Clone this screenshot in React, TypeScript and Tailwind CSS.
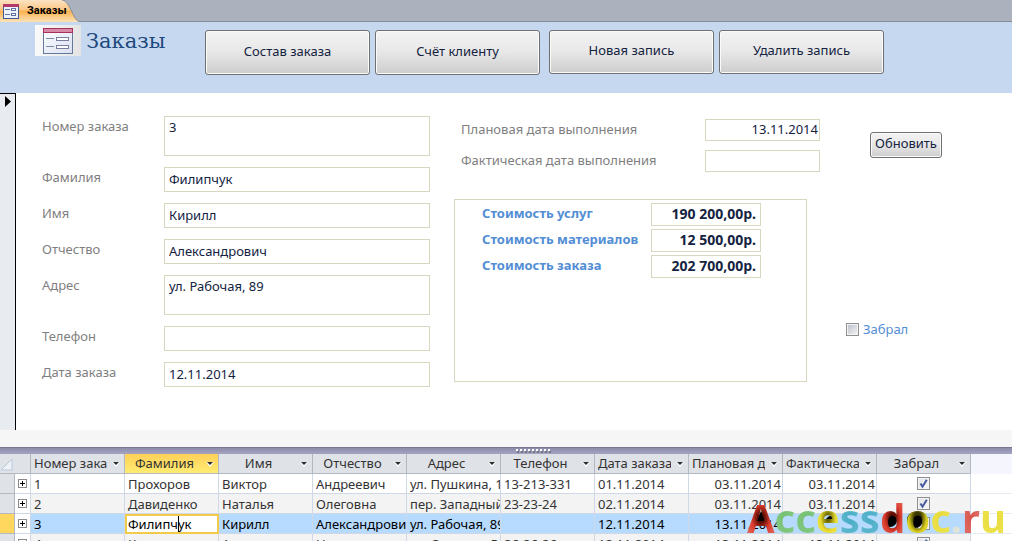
import { ReactNode } from 'react';
import clsx from 'clsx';

const columns = [
    'Номер заказа',
    'Фамилия',
    'Имя',
    'Отчество',
    'Адрес',
    'Телефон',
    'Дата заказа',
    'Плановая дата',
    'Фактическая дата',
];

const orders = [
    { cells: ['1', 'Прохоров', 'Виктор', 'Андреевич', 'ул. Пушкина, 12', '13-213-331', '01.11.2014', '03.11.2014', '03.11.2014'], done: true },
    { cells: ['2', 'Давиденко', 'Наталья', 'Олеговна', 'пер. Западный, 4', '23-23-24', '02.11.2014', '03.11.2014', '03.11.2014'], done: true },
    { cells: ['3', 'Филипчук', 'Кирилл', 'Александрович', 'ул. Рабочая, 89', '', '12.11.2014', '13.11.2014', ''], done: false },
    { cells: ['4', 'Коваль', 'Анна', 'Николаевна', 'ул. Садовая, 5', '26-26-26', '12.11.2014', '13.11.2014', '13.11.2014'], done: true },
];

const costs = [
    { id: 'services', label: 'Стоимость услуг', value: '190 200,00р.' },
    { id: 'materials', label: 'Стоимость материалов', value: '12 500,00р.' },
    { id: 'total', label: 'Стоимость заказа', value: '202 700,00р.' },
];

const red = 'from-[#5a0d04] from-15% via-[#d8392b] via-45% to-[#e8756a]';
const green = 'from-[#72c070] to-[#8ccc8b]';
const blue = 'from-[#48adc6] to-[#66bcd1]';
const yellow = 'from-[#e6da38] to-[#f0e654]';

const logo = [
    { letter: 'A', color: red },
    { letter: 'c', color: green },
    { letter: 'c', color: green },
    { letter: 'e', color: 'from-[#6a6400] from-10% via-[#e8dc30] via-45% to-[#f0e654]' },
    { letter: 's', color: blue },
    { letter: 's', color: blue },
    { letter: 'd', color: red },
    { letter: 'o', color: 'from-[#3c3800] from-20% via-[#d8cc20] via-50% to-[#f0e654]' },
    { letter: 'c', color: yellow },
    { letter: '.', color: 'from-[#dfe3d8] to-[#dfe3d8]' },
    { letter: 'r', color: 'from-[#d9554c] to-[#e0766e]' },
    { letter: 'u', color: yellow },
];

function FormIcon({ className }: { className: string }) {
    return (
        <svg viewBox="0 0 30 26" className={className} aria-hidden="true">
            <defs>
                <linearGradient id="sheet" x1="0" y1="0" x2="1" y2="1">
                    <stop offset="0" stopColor="#ffffff" />
                    <stop offset="1" stopColor="#d9e0f2" />
                </linearGradient>
            </defs>
            <rect x="0.5" y="0.5" width="29" height="25" fill="url(#sheet)" stroke="#65799c" />
            <rect x="0" y="0" width="30" height="5" fill="#a92f5d" />
            <rect x="1" y="1" width="28" height="3" fill="#d68aa8" />
            <path d="M3 10.5h8M3 18.5h8" stroke="#7c8ba8" />
            <rect x="13.5" y="9.5" width="12" height="3" fill="#fff" stroke="#7c7e9f" />
            <rect x="13.5" y="17.5" width="12" height="3" fill="#fff" stroke="#7c7e9f" />
        </svg>
    );
}

function SmallFormIcon() {
    return (
        <svg viewBox="0 0 16 15" className="h-[15px] w-4" aria-hidden="true">
            <rect x="0.5" y="0.5" width="15" height="14" fill="#eef2fb" stroke="#3d5a92" />
            <rect x="0" y="0" width="16" height="3" fill="#b23a68" />
            <path d="M2 5.5h5M2 10.5h5" stroke="#5f77a6" />
            <rect x="8.5" y="4.5" width="4" height="2" fill="#fff" stroke="#5f6f9e" />
            <rect x="8.5" y="9.5" width="4" height="2" fill="#fff" stroke="#5f6f9e" />
        </svg>
    );
}

function CommandButton({ className, children }: { className: string; children: ReactNode }) {
    return (
        <button
            type="button"
            className={clsx(
                'shrink-0 rounded-[3px] border border-[#707070] bg-linear-to-b from-[#f3f3f3] from-0% via-[#e8e8e8] via-48% to-[#cdcdcd] to-100% pb-0.5 text-[#14233f] shadow-[inset_0_0_0_1px_#fbfbfb]',
                className,
            )}
        >
            {children}
        </button>
    );
}

function Field({ id, label, value, tall }: { id: string; label: string; value: string; tall?: boolean }) {
    return (
        <div className="flex items-start">
            <label htmlFor={id} className="w-[122px] shrink-0 leading-5 text-[#7f7f7f]">
                {label}
            </label>
            {tall ? (
                <textarea
                    id={id}
                    defaultValue={value}
                    className="h-10 w-[266px] resize-none border border-[#d9d7c0] bg-white px-1 leading-5 text-[#14233f]"
                />
            ) : (
                <input
                    id={id}
                    defaultValue={value}
                    className="h-[25px] w-[266px] border border-[#d9d7c0] bg-white px-1 pb-0.5 text-[#14233f]"
                />
            )}
        </div>
    );
}

function DateField({ id, label, value }: { id: string; label: string; value: string }) {
    return (
        <div className="flex items-start justify-between pl-[7px]">
            <label htmlFor={id} className="leading-5 text-[#7f7f7f]">{label}</label>
            <input
                id={id}
                defaultValue={value}
                className="h-[22px] w-[115px] border border-[#d9d7c0] bg-white pr-px pb-0.5 text-right text-[#14233f]"
            />
        </div>
    );
}

function GridCheck({ checked, label }: { checked: boolean; label: string }) {
    return (
        <span className="relative mx-auto block size-[13px]">
            <input
                type="checkbox"
                aria-label={label}
                defaultChecked={checked}
                className="peer block size-[13px] appearance-none border border-[#8e8f8f] bg-linear-to-br from-[#dfe2e8] to-[#f8f8f8] shadow-[inset_0_0_0_1px_#f4f4f4]"
            />
            <svg viewBox="0 0 13 13" className="pointer-events-none absolute inset-0 hidden size-[13px] peer-checked:block" aria-hidden="true">
                <path d="M3.5 6.5l2 3.2L9.8 2.8" fill="none" stroke="#45599c" strokeWidth="2" />
            </svg>
        </span>
    );
}

function Logo() {
    return (
        <div className="pointer-events-none absolute right-1.5 bottom-[3px] h-10">
            <svg viewBox="0 0 257 40" className="absolute inset-0 h-10 w-[257px]" aria-hidden="true">
                <path d="M14 13l7 13H8z" />
                <path d="M79 21q4-6 9 0z" />
                <ellipse cx="143" cy="22" rx="7" ry="7" />
                <ellipse cx="168" cy="22" rx="8" ry="8" />
            </svg>
            <div className="relative flex text-[40px] leading-10 font-bold">
                {logo.map(({ letter, color }, i) => (
                    <span key={i} className={clsx('bg-radial bg-clip-text text-transparent', color)}>
                        {letter}
                    </span>
                ))}
            </div>
        </div>
    );
}

function OrdersGrid() {
    return (
        <table className="w-full table-fixed border-separate border-spacing-0 text-[#333]">
            <colgroup>
                <col className="w-[15px]" />
                <col className="w-4" />
                {columns.map((c) => (
                    <col key={c} className="w-[94px]" />
                ))}
                <col className="w-[94px]" />
                <col />
            </colgroup>
            <thead>
                <tr className="h-5">
                    <th className="border-b border-[#b4b8c0] bg-[#dfe3e8] p-0">
                        <svg viewBox="0 0 15 19" className="block h-[19px] w-[15px]" aria-hidden="true">
                            <path d="M12 5v11H1z" fill="#eef2f7" stroke="#b9c9dc" />
                        </svg>
                    </th>
                    <th className="border-r border-b border-[#b4b8c0] bg-[#dfe3e8] p-0" />
                    {[...columns, 'Забрал'].map((c) => (
                        <th
                            key={c}
                            className={clsx(
                                'border-r border-b border-[#b4b8c0] p-0 font-normal',
                                c === 'Фамилия' ? 'bg-linear-to-b from-[#ffd058] to-[#ffec72]' : 'bg-[#dfe2e7]',
                            )}
                        >
                            <div className="flex h-[19px] items-center pl-[3px]">
                                <span className="w-[73px] overflow-hidden leading-[19px] whitespace-nowrap">{c}</span>
                                <svg viewBox="0 0 8 6" className="ml-[5px] h-1.5 w-2" aria-hidden="true">
                                    <path d="M0 1h8L4 6z" fill="#fff" />
                                    <path d="M1 1h6L4 4z" fill="#2c2c2c" />
                                </svg>
                            </div>
                        </th>
                    ))}
                    <th className="bg-[#f5f6fd] p-0" />
                </tr>
            </thead>
            <tbody>
                {orders.map(({ cells, done }, row) => {
                    const current = row === 2;
                    return (
                        <tr
                            key={cells[0]}
                            className={clsx('h-5', current ? 'bg-[#b7dbff] text-black' : row % 2 ? 'bg-[#f3f3f3]' : 'bg-white')}
                        >
                            <td className={clsx('border-r border-b border-[#b4b8c0] p-0', current ? 'bg-[#ffd75f]' : 'bg-[#dfe3e8]')} />
                            <td className="border-r border-b border-[#cfd8e6] bg-white p-0">
                                <button type="button" aria-label="Развернуть" className="mx-auto block size-[9px]">
                                    <svg viewBox="0 0 9 9" className="block size-[9px]">
                                        <rect x="0.5" y="0.5" width="8" height="8" fill="#fff" stroke="#8a8a8a" />
                                        <path d="M2 4.5h5M4.5 2v5" stroke="#000" />
                                    </svg>
                                </button>
                            </td>
                            {cells.map((text, col) => {
                                if (current && col === 1) {
                                    return (
                                        <td key={col} className="relative bg-white p-0">
                                            <input
                                                aria-label="Фамилия"
                                                defaultValue={text}
                                                className="block h-5 w-full border-2 border-[#f2cb4a] bg-white pl-px"
                                            />
                                            <span className="absolute top-0.5 left-[53px] h-4 w-px bg-black" />
                                        </td>
                                    );
                                }
                                return (
                                    <td key={col} className="border-r border-b border-[#cfd8e6] p-0">
                                        <div
                                            className={clsx(
                                                'h-[19px] overflow-hidden pt-px pl-[3px] leading-[19px] whitespace-nowrap',
                                                col > 6 && 'pr-px text-right',
                                            )}
                                        >
                                            {text}
                                        </div>
                                    </td>
                                );
                            })}
                            <td className="border-r border-b border-[#cfd8e6] p-0">
                                <GridCheck checked={done} label={`Забрал, заказ ${cells[0]}`} />
                            </td>
                            <td className="border-b border-[#e6eaf2] bg-white p-0" />
                        </tr>
                    );
                })}
            </tbody>
        </table>
    );
}

export default function App() {
    return (
        <div className="relative flex h-screen flex-col overflow-hidden bg-white font-['Noto_Sans','Open_Sans',sans-serif] text-[13px]">
            <nav className="flex h-[22px] shrink-0 border-b border-[#868d97] bg-[#abb1bd]">
                <button type="button" className="relative h-[22px] w-20 font-[Roboto,sans-serif] text-[11px] font-bold text-black">
                    <svg viewBox="0 0 80 22" className="absolute inset-0 h-[22px] w-20" aria-hidden="true">
                        <defs>
                            <linearGradient id="tab" x1="0" y1="0" x2="0" y2="1">
                                <stop offset="0" stopColor="#fbe3c3" />
                                <stop offset="0.45" stopColor="#fdc684" />
                                <stop offset="0.5" stopColor="#fcb04c" />
                                <stop offset="1" stopColor="#fbe2b8" />
                            </linearGradient>
                        </defs>
                        <path d="M0 0h62c5 1 7 6 10 12s4 9 8 10H0z" fill="url(#tab)" />
                        <path d="M62 0c5 1 7 6 10 12s4 9 8 9.500" fill="none" stroke="#868d97" />
                    </svg>
                    <span className="relative flex items-center gap-2 pl-[3px] leading-5">
                        <SmallFormIcon />
                        Заказы
                    </span>
                </button>
            </nav>

            <header className="flex h-[71px] shrink-0 items-start bg-[#c6d8f0] pl-[35px]">
                <div className="mt-[3px] flex h-[31px] w-[46px] items-center justify-center bg-linear-to-r from-[#fafafa] to-[#e4e4e4]">
                    <FormIcon className="h-[26px] w-[30px]" />
                </div>
                <h1 className="w-[124px] pt-1 pl-[5px] font-['DejaVu_Serif',serif] text-[21px] leading-[30px] text-[#1f497d]">Заказы</h1>
                <div className="flex gap-[9px] pt-2">
                    <div className="flex gap-[5px]">
                        <CommandButton className="h-[45px] w-[165px]">Состав заказа</CommandButton>
                        <CommandButton className="h-[45px] w-[165px]">Счёт клиенту</CommandButton>
                    </div>
                    <div className="flex gap-[5px]">
                        <CommandButton className="h-11 w-[165px]">Новая запись</CommandButton>
                        <CommandButton className="h-11 w-[165px]">Удалить запись</CommandButton>
                    </div>
                </div>
            </header>

            <main className="flex shrink-0">
                <div className="w-4 shrink-0 border-t border-r border-black bg-[#e8ebf0]">
                    <svg viewBox="0 0 15 16" className="h-4 w-[15px]" aria-hidden="true">
                        <path d="M5 2v11l6-5.500z" />
                    </svg>
                </div>

                <form className="flex shrink-0 flex-col gap-[11px] pt-[23px] pb-[43px] pl-[26px]">
                    <Field id="number" label="Номер заказа" value="3" tall />
                    <Field id="surname" label="Фамилия" value="Филипчук" />
                    <Field id="name" label="Имя" value="Кирилл" />
                    <Field id="patronymic" label="Отчество" value="Александрович" />
                    <Field id="address" label="Адрес" value="ул. Рабочая, 89" tall />
                    <Field id="phone" label="Телефон" value="" />
                    <Field id="date" label="Дата заказа" value="12.11.2014" />
                </form>

                <section className="ml-6 w-[366px] shrink-0 pt-[26px]">
                    <div className="flex flex-col gap-[9px]">
                        <DateField id="planned" label="Плановая дата выполнения" value="13.11.2014" />
                        <DateField id="actual" label="Фактическая дата выполнения" value="" />
                    </div>
                    <div className="mt-[27px] mr-[13px] flex h-[183px] flex-col gap-[3px] border border-[#d9d7c0] pt-[3px] pl-[27px]">
                        {costs.map(({ id, label, value }) => (
                            <div key={id} className="flex">
                                <label htmlFor={id} className="w-[169px] leading-5 font-bold text-[#538ed5]">{label}</label>
                                <input
                                    id={id}
                                    defaultValue={value}
                                    className="h-[23px] w-[110px] border border-[#d9d7c0] bg-white pr-1 pb-0.5 text-right text-[14px] font-bold text-[#14233f]"
                                />
                            </div>
                        ))}
                    </div>
                </section>

                <aside className="flex flex-col items-start pt-[39px] pl-[26px]">
                    <CommandButton className="ml-6 h-[26px] w-[72px]">Обновить</CommandButton>
                    <label className="mt-[161px] flex items-center gap-1 leading-5 text-[#538ed5]">
                        <input
                            type="checkbox"
                            className="size-[13px] appearance-none border border-[#8e8f8f] bg-linear-to-br from-[#b9bfc9] to-[#f6f6f6] shadow-[inset_0_0_0_1px_#f4f4f4]"
                        />
                        Забрал
                    </label>
                </aside>
            </main>

            <div className="h-[17px] shrink-0 bg-[#f6f6f6]" />
            <div className="flex h-[7px] shrink-0 items-center justify-center border-t border-[#77778f] bg-linear-to-b from-[#8d8dab] to-[#a5a5c2] pl-14">
                <svg viewBox="0 0 36 4" className="h-1 w-9" aria-hidden="true">
                    <path d="M0 1h36" stroke="#fff" strokeWidth="2" strokeDasharray="2 2" />
                    <path d="M1 3h35" stroke="#4a4a5e" strokeWidth="1" strokeDasharray="2 2" />
                </svg>
            </div>

            <div className="min-h-0 flex-1 overflow-hidden">
                <OrdersGrid />
            </div>
            <Logo />
        </div>
    );
}
